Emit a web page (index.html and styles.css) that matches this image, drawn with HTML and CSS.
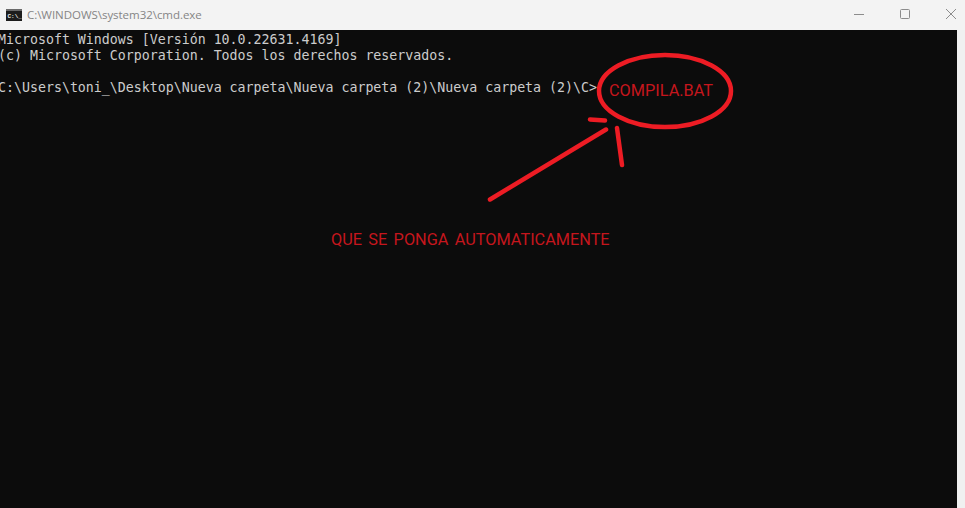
FILE: index.html
```html
<!DOCTYPE html>
<html lang="es">
<head>
<meta charset="utf-8">
<title>cmd.exe</title>
<link rel="stylesheet" href="styles.css">
</head>
<body>
<div class="window">
  <header class="titlebar">
    <svg class="app-icon" width="16" height="12" viewBox="0 0 16 12">
      <rect width="16" height="12" fill="#1c1c1c"/>
      <rect x="0" y="0" width="16" height="2" fill="#6a6a6a"/>
      <text x="1.500" y="9" class="app-icon-text">C:\_</text>
    </svg>
    <span class="title">C:\WINDOWS\system32\cmd.exe</span>
    <div class="controls">
      <svg class="control" width="46" height="30" viewBox="0 0 46 30"><path d="M18 14.500h10" stroke="#8c8c8c" fill="none"/></svg>
      <svg class="control" width="46" height="30" viewBox="0 0 46 30"><rect x="18.500" y="9.500" width="9" height="9" rx="1" stroke="#8c8c8c" fill="none"/></svg>
      <svg class="control" width="46" height="30" viewBox="0 0 46 30"><path d="M18 9l10 10M28 9l-10 10" stroke="#8c8c8c" fill="none"/></svg>
    </div>
  </header>
  <main class="console">
    <pre class="output">Microsoft Windows [Versión 10.0.22631.4169]
(c) Microsoft Corporation. Todos los derechos reservados.

C:\Users\toni_\Desktop\Nueva carpeta\Nueva carpeta (2)\Nueva carpeta (2)\C&gt;</pre>
    <svg class="marks" width="957" height="478" viewBox="0 30 957 478">
      <ellipse cx="665" cy="91" rx="66" ry="36" fill="none" stroke="#ed1c24" stroke-width="4.500"/>
      <path d="M590 119.500L605 120.500M490 199.500L606 129.500M617 128L622 165" fill="none" stroke="#ed1c24" stroke-width="4.500" stroke-linecap="round"/>
    </svg>
    <span class="note note-bat">COMPILA.BAT</span>
    <span class="note note-auto">QUE SE PONGA AUTOMATICAMENTE</span>
  </main>
</div>
</body>
</html>
```
FILE: styles.css
```css
* { box-sizing: border-box; }
html, body { margin: 0; height: 100%; }
body { background: #f0f0f0; overflow: hidden; }
.window { display: flex; flex-direction: column; width: 965px; height: 508px; background: #f0f0f0; overflow: hidden; }
.titlebar { display: flex; align-items: center; height: 30px; flex: none; padding-left: 6px; background: #f3f3f3; }
.app-icon { flex: none; margin-top: -1px; }
.app-icon-text { font: bold 6px "Liberation Mono", monospace; fill: #f0f0f0; }
.title { margin-left: 5px; margin-top: -1px; font: 11.500px "Open Sans", sans-serif; color: #858585; letter-spacing: -0.04px; }
.controls { display: flex; flex: none; margin-left: auto; margin-right: -9px; }
.control { display: block; flex: none; }
.console { position: relative; flex: 1; width: 957px; background: #0c0c0c; overflow: hidden; }
.output { margin: 0 0 0 -2px; padding: 2px 0 0 0; font: 13.270px/16px "DejaVu Sans Mono", monospace; color: #cccccc; }
.marks { position: absolute; left: 0; top: 0; }
.note { position: absolute; font-family: "Roboto", sans-serif; font-size: 16.300px; color: #c5161d; white-space: nowrap; }
.note-bat { left: 609px; top: 51px; }
.note-auto { left: 331px; top: 200px; word-spacing: 2.300px; }
```
